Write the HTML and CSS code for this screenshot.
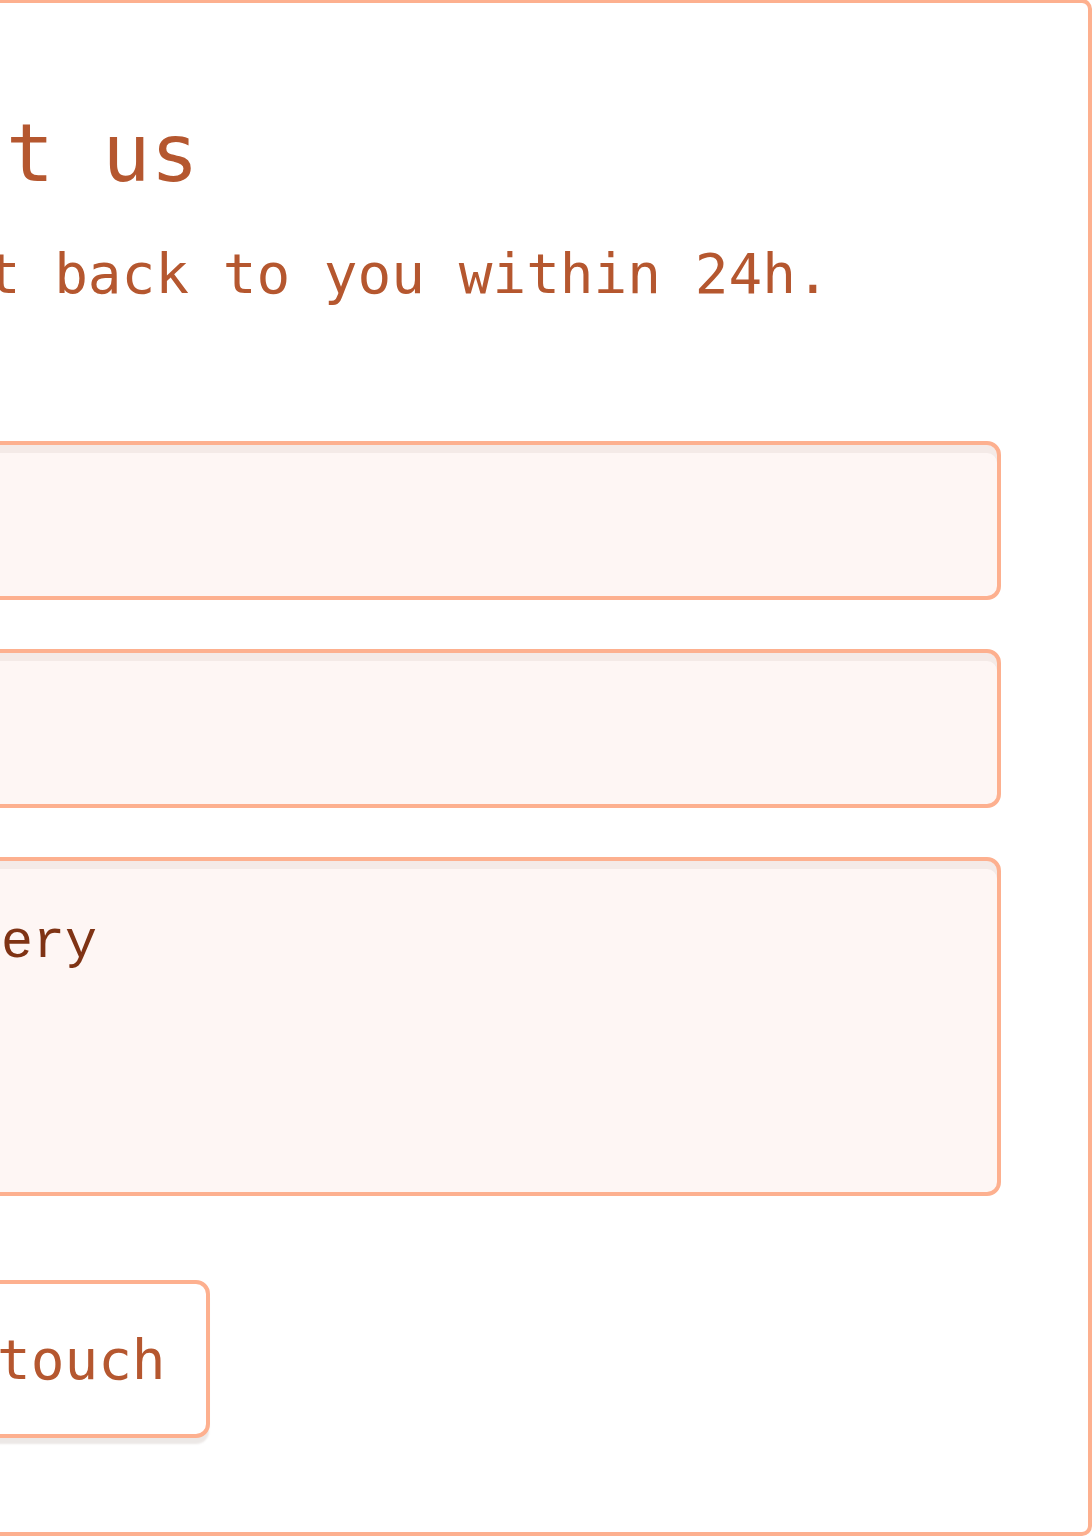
FILE: index.html
```html
<!DOCTYPE html>
<html lang="en">
<head>
<meta charset="utf-8">
<title>Contact us</title>
<link rel="stylesheet" href="styles.css">
</head>
<body>
<div class="page">
  <section class="card">
    <h1 class="title">Contact us</h1>
    <p class="subtitle">We'll get back to you within 24h.</p>
    <form class="form">
      <input class="field" type="text" placeholder="Name">
      <input class="field" type="email" placeholder="Email">
      <textarea class="field area">Your query</textarea>
      <div class="actions">
        <button class="btn" type="button">Get in touch</button>
      </div>
    </form>
  </section>
</div>
</body>
</html>
```

FILE: styles.css
```css
html, body {
  margin: 0;
  padding: 0;
  background: #ffffff;
}

.page {
  width: 1092px;
  height: 1536px;
  overflow: hidden;
}

.card {
  box-sizing: border-box;
  width: 1492px;
  height: 1537px;
  margin-left: -400px;
  margin-top: -1px;
  background: #ffffff;
  border: 4px solid #fdb08f;
  border-radius: 10px;
  padding: 104px 87px 0 113px;
  font-family: "DejaVu Sans Mono", monospace;
  color: #b5572f;
}

.title {
  margin: 0;
  font-size: 80px;
  font-weight: 400;
  line-height: normal;
}

.subtitle {
  margin: 41px 0 0;
  font-size: 56px;
  line-height: normal;
}

.form {
  display: flex;
  flex-direction: column;
  gap: 49px;
  margin-top: 135px;
}

.field {
  box-sizing: border-box;
  display: block;
  width: 100%;
  height: 159px;
  margin: 0;
  border: 4px solid #fdb08f;
  border-radius: 14px;
  background: #fef6f4;
  box-shadow: inset 0 8px 0 rgba(90, 50, 40, 0.06);
  padding: 0 48px;
  font-family: "DejaVu Sans Mono", monospace;
  font-size: 56px;
  color: #7f3314;
  outline: none;
}

.field::placeholder {
  color: #d9a58e;
}

.area {
  height: 339px;
  resize: none;
  padding: 52px 56px;
  font-family: "Courier New", Courier, "Nimbus Mono PS", "FreeMono", "Liberation Mono", monospace;
  font-size: 53.33px;
  line-height: 60.45px;
  color: #7f3314;
}

.actions {
  display: flex;
  margin-top: 35px;
}

.btn {
  box-sizing: border-box;
  height: 158px;
  display: flex;
  align-items: center;
  padding: 0 40px;
  background: #ffffff;
  border: 4px solid #fdb08f;
  border-radius: 14px;
  box-shadow: 0 7px 2px -1px rgba(120, 90, 80, 0.14);
  font-family: "DejaVu Sans Mono", monospace;
  font-size: 56px;
  line-height: normal;
  color: #b5572f;
  cursor: pointer;
}
```
